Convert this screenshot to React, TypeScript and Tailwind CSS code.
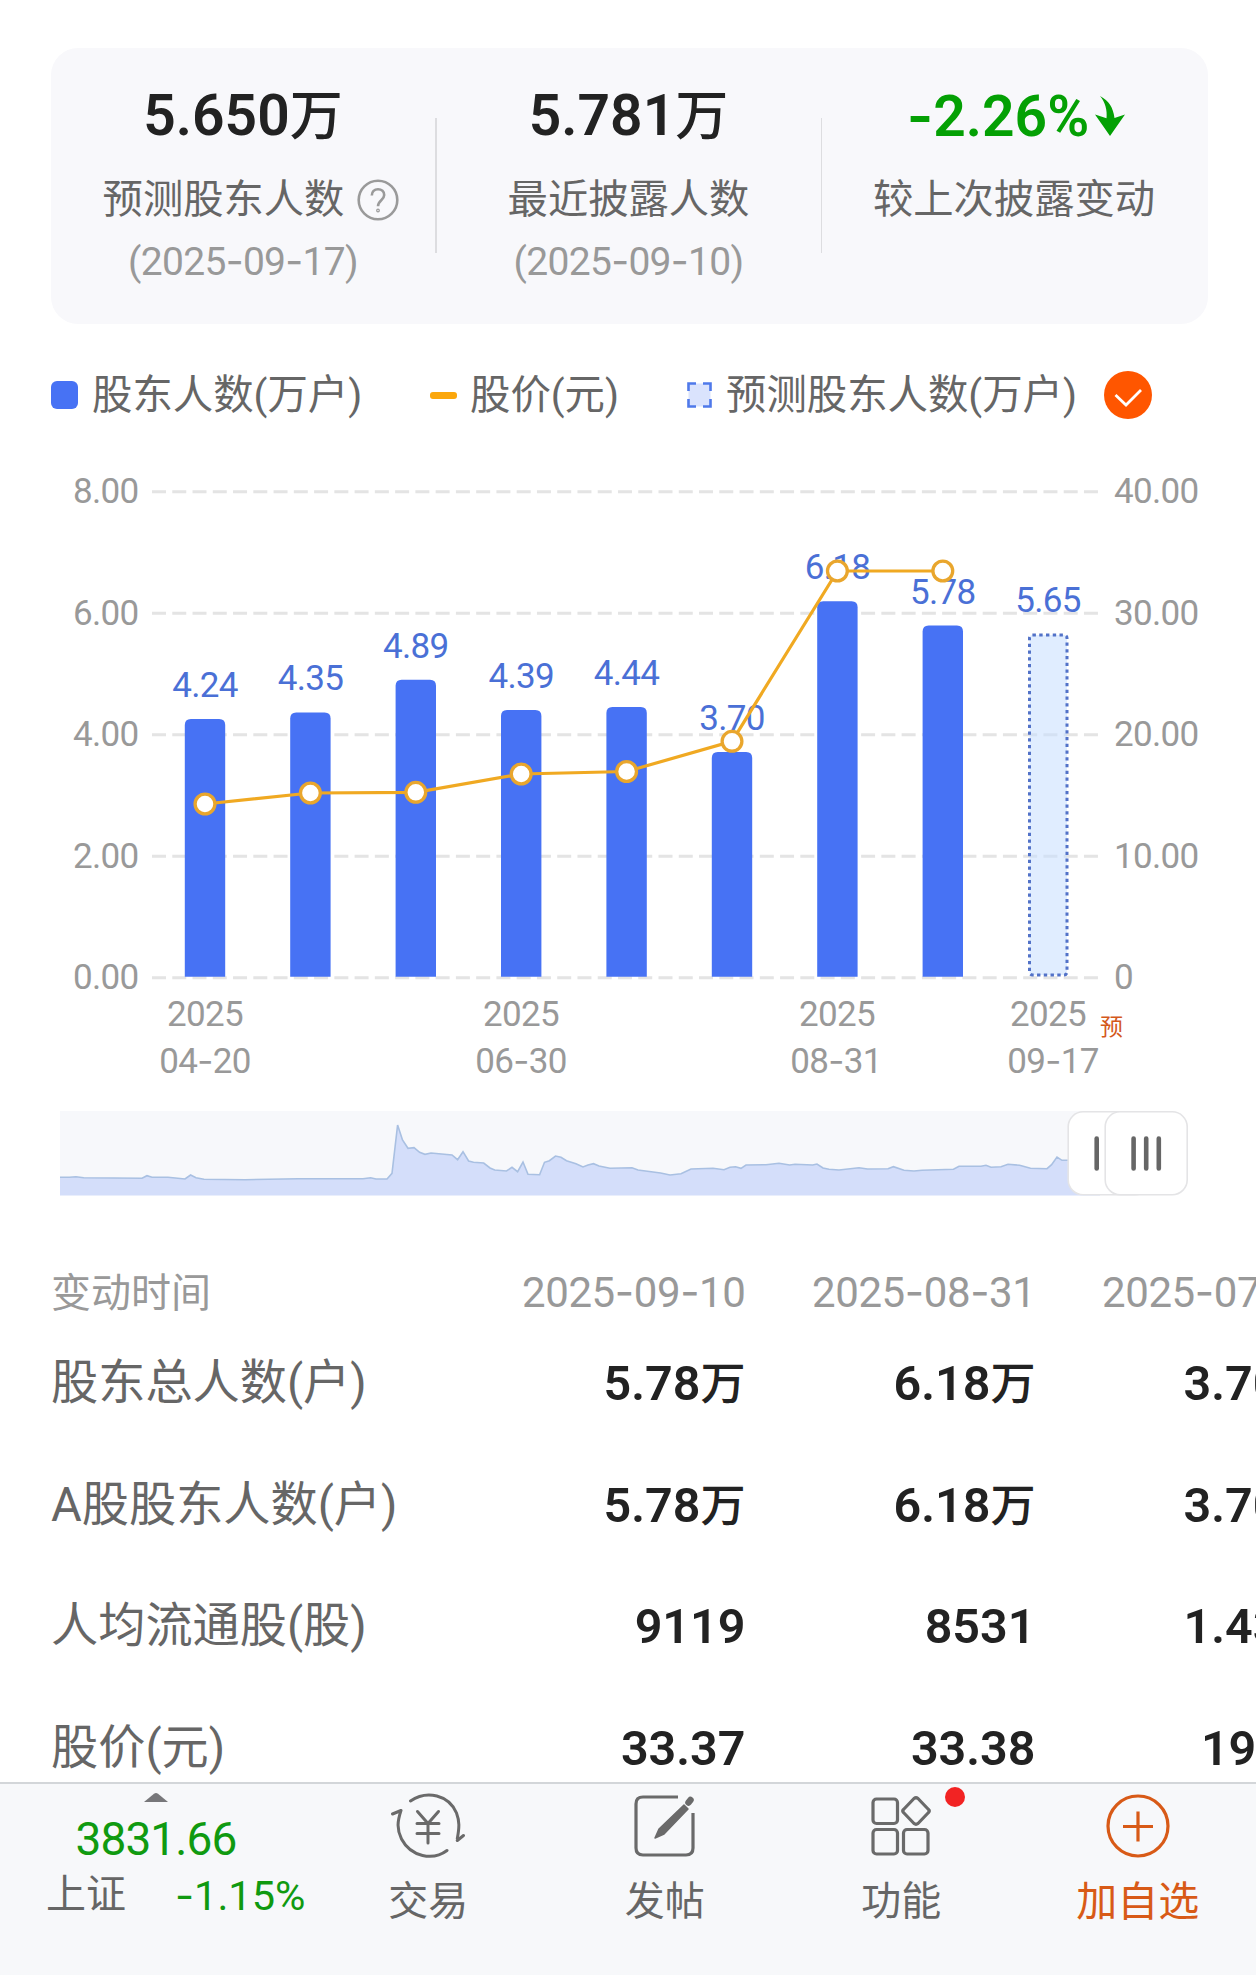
import { Fragment } from "react"

const holders = [
  { value: 4.24, priceY: 804 },
  { value: 4.35, priceY: 793 },
  { value: 4.89, priceY: 792.3 },
  { value: 4.39, priceY: 774 },
  { value: 4.44, priceY: 771.5 },
  { value: 3.7, priceY: 741.3 },
  { value: 6.18, priceY: 571 },
  { value: 5.78, priceY: 571 },
]

const axis = [
  { left: "8.00", right: "40.00", y: 491.7 },
  { left: "6.00", right: "30.00", y: 613.3 },
  { left: "4.00", right: "20.00", y: 734.7 },
  { left: "2.00", right: "10.00", y: 856.2 },
  { left: "0.00", right: "0", y: 977.7 },
]

const dates = [
  { year: "2025", day: "04-20", x: 205, dayX: 205 },
  { year: "2025", day: "06-30", x: 521, dayX: 521 },
  { year: "2025", day: "08-31", x: 837, dayX: 836 },
  { year: "2025", day: "09-17", x: 1048, dayX: 1053 },
]

const columns = ["2025-09-10", "2025-08-31", "2025-07-31"]

const rows = [
  { name: "股东总人数(户)", values: ["5.78万", "6.18万", "3.70万"] },
  { name: "A股股东人数(户)", values: ["5.78万", "6.18万", "3.70万"] },
  { name: "人均流通股(股)", values: ["9119", "8531", "1.43万"] },
  { name: "股价(元)", values: ["33.37", "33.38", "19.45"] },
]

const history =
  "0,66.3 9.4,66.3 16,65.7 23.7,66.7 82,67.3 87,64.7 92,66.3 108,66.3 125,68 130.6,64 136,66.7 144,68.3 185,68.7 238,67.7 303,67.7 310.6,66.7 316,68 327,68 332,62.3 337.6,14 342.5,29 348,37.3 354,36.7 359.6,41.3 365,43.3 371,42 392,44 397.6,48.7 403,40.7 408.6,50 413.5,51.3 423.7,52 430,57 434.7,59 446.5,60 452,56.3 457.6,60.7 463,51 468,63.3 479.6,63.7 484.5,51.3 489.4,49.7 495.5,45 501,46.3 506.5,49.7 516,52.7 523,56 528,54 533.5,52.7 539,55 550,57.3 572,56.7 578,59 600.6,62 610,64 621,62.7 631,58 653,57.3 664,58.7 670,56.3 675.6,55.7 681,57.3 686,54 706,53.7 719,52.3 729.6,54 735,53.3 752.7,54 757,53 763,57 769,58.3 779,59 799,56.7 807.5,58 828,57.7 833.4,55.7 844,59.3 854,60 862,59.3 893.5,58.3 899,55.3 921,55.3 926,54.3 931,56.3 941,55.7 948,53.3 959.6,54.3 970.5,57.3 987,57.7 991.6,53.7 997,46 1002,49.3 1040,49.3"

const barX = (i: number) => 205 + i * 105.4
const barTop = (value: number) => 976.7 - value * 60.75

// Roboto has a very short hyphen, so take that one from Inter
const Dashed = ({ text }: { text: string }) => (
  <>
    {text.split("-").map((part, i) => (
      <Fragment key={i}>
        {i > 0 && <span className="font-['Inter']">-</span>}
        {part}
      </Fragment>
    ))}
  </>
)

const DashedSvg = ({ text }: { text: string }) => (
  <>
    {text.split("-").map((part, i) => (
      <Fragment key={i}>
        {i > 0 && <tspan className="font-['Inter']">-</tspan>}
        {part}
      </Fragment>
    ))}
  </>
)

// the unit is a little smaller and lighter than the digits
const Amount = ({ text }: { text: string }) => (
  <>
    {text.replace("万", "")}
    {text.endsWith("万") && <span className="text-[0.93em] font-medium">万</span>}
  </>
)

function Summary() {
  return (
    <section className="mx-[51px] mt-12 flex h-[276px] w-[1157px] shrink-0 items-start rounded-[27px] bg-[#f8f8fb]">
      <div className="flex w-96 flex-col items-center pt-[35px]">
        <div className="h-[66px] text-[57px] leading-[66px] font-semibold text-[#222]"><Amount text="5.650万" /></div>
        <div className="ml-4 mt-[21px] flex h-[60px] items-center gap-[13px] text-[40.3px] leading-[60px] text-[#666]">
          预测股东人数
          <svg width="42" height="42" viewBox="0 0 42 42" fill="none" stroke="#9a9a9a" strokeWidth="2.6">
            <circle cx="21" cy="21" r="19.3" />
            <path d="M14.8 16.5c0-3.8 2.6-6.3 6.2-6.3s6.2 2.4 6.2 5.8c0 5.2-6.2 5.4-6.2 11.3" />
            <circle cx="21" cy="31.5" r=".6" />
          </svg>
        </div>
        <div className="mt-px h-[60px] text-[39px] leading-[60px] tracking-[-0.7px] text-[#999]"><Dashed text="(2025-09-17)" /></div>
      </div>
      <div className="mt-[70px] h-[135px] w-[1.5px] bg-[#dddde0]" />
      <div className="flex w-96 flex-col items-center pt-[35px]">
        <div className="h-[66px] text-[57px] leading-[66px] font-semibold text-[#222]"><Amount text="5.781万" /></div>
        <div className="mt-[21px] h-[60px] text-[40.3px] leading-[60px] text-[#666]">最近披露人数</div>
        <div className="mt-px h-[60px] text-[39px] leading-[60px] tracking-[-0.7px] text-[#999]"><Dashed text="(2025-09-10)" /></div>
      </div>
      <div className="mt-[70px] h-[135px] w-[1.5px] bg-[#dddde0]" />
      <div className="flex w-96 flex-col items-center pt-[35px]">
        <div className="ml-1 flex h-[66px] items-center gap-1.5 text-[57px] leading-[66px] font-semibold text-[#04a004]">
          <span><Dashed text="-2.26%" /></span>
          <svg width="30" height="40" viewBox="0 0 30 40" fill="#04a004">
            <path d="M5 0C14 5 18 11 19.5 22L30 18.5 15 40 0 18.5l11.5 3.8C12.500 14 10 6 5 0Z" />
          </svg>
        </div>
        <div className="mt-[21px] h-[60px] text-[40.3px] leading-[60px] text-[#666]">较上次披露变动</div>
      </div>
    </section>
  )
}

function Legend() {
  return (
    <div className="mt-[41px] ml-[51px] flex h-[60px] shrink-0 items-center text-[40.4px] leading-[60px] text-[#666]">
      <span className="mr-[14px] h-7 w-[27px] rounded-md bg-[#4772f4]" />
      <span className="w-[338px] pt-0.5">股东人数(万户)</span>
      <span className="mr-[13px] h-[7px] w-[27px] rounded-[3px] bg-[#fba70c]" />
      <span className="w-[217px] pt-0.5">股价(元)</span>
      <svg className="mr-[14px]" width="25" height="26" viewBox="0 0 25 26">
        <rect x="1.500" y="1.500" width="22" height="23" fill="#dae3fd" />
        <path d="M1.500 9V1.500H9M16 1.500h7.500V9M23.500 17v7.500H16M9 24.500H1.500V17" fill="none" stroke="#4f79ea" strokeWidth="2.600" />
      </svg>
      <span className="w-[378px] pt-0.5">预测股东人数(万户)</span>
      <svg width="48" height="48" viewBox="0 0 48 48">
        <circle cx="24" cy="24" r="24" fill="#ff5600" />
        <path d="M11.500 24L22 34 37 19" fill="none" stroke="#fff" strokeWidth="2.800" />
      </svg>
    </div>
  )
}

function Chart() {
  return (
    <svg className="mt-5 block shrink-0 text-[35px] tracking-[-0.7px]" width="1256" height="650" viewBox="0 445 1256 650">
      {axis.map((a) => (
        <g key={a.left} fill="#999">
          <line x1="152" x2="1098" y1={a.y} y2={a.y} stroke="#e4e4e4" strokeWidth="3" strokeDasharray="14 6.26" />
          <text x="138.500" y={a.y + 11.5} textAnchor="end">{a.left}</text>
          <text x="1114" y={a.y + 11.5}>{a.right}</text>
        </g>
      ))}
      {holders.map((h, i) => {
        const x = barX(i) - 20.2
        const y = barTop(h.value)
        return (
          <g key={i}>
            <path d={`M${x} 976.700V${y + 6}q0-6 6-6h28.400q6 0 6 6V976.700Z`} fill="#4772f4" />
            <text x={barX(i)} y={y - 22} textAnchor="middle" fill="#4a70d6">{h.value.toFixed(2)}</text>
          </g>
        )
      })}
      <rect x="1029.500" y="635" width="37.500" height="340" rx="3" fill="#c7dfff" fillOpacity=".55" stroke="#5272c8" strokeWidth="3" strokeDasharray="3.400 3.350" />
      <text x="1048" y="611.500" textAnchor="middle" fill="#4a70d6">5.65</text>
      <polyline points={holders.map((h, i) => `${barX(i)},${h.priceY}`).join(" ")} fill="none" stroke="#f0a922" strokeWidth="3.200" />
      {holders.map((h, i) => (
        <circle key={i} cx={barX(i)} cy={h.priceY} r="9.900" fill="#fff" stroke="#e9a62d" strokeWidth="3.300" />
      ))}
      {dates.map((d) => (
        <g key={d.day} fill="#999" textAnchor="middle">
          <text x={d.x} y="1026">{d.year}</text>
          <text x={d.dayX} y="1073"><DashedSvg text={d.day} /></text>
        </g>
      ))}
      <text x="1100" y="1035" className="text-[23px]" fill="#d4591b">预</text>
    </svg>
  )
}

function RangeSlider() {
  return (
    <svg className="mt-4 ml-[59.5px] block shrink-0" width="1130" height="85" viewBox="0 0 1130 85">
      <rect width="1060" height="84" fill="#f7f8fb" />
      <polygon points={`0,84.500 ${history} 1040,84.500`} fill="#d4defa" />
      <polyline points={history} fill="none" stroke="#a9c0e2" strokeWidth="1.600" />
      <rect x="1008.200" y=".8" width="82" height="83" rx="15" fill="#fff" stroke="#e4e4e6" strokeWidth="1.600" />
      <path d="M1036.700 27.500v30" stroke="#666" strokeWidth="4.600" strokeLinecap="round" />
      <rect x="1045.200" y=".8" width="82" height="83" rx="15" fill="#fff" stroke="#e4e4e6" strokeWidth="1.600" />
      <path d="M1073.600 27.500v30M1086.200 27.500v30M1098.800 27.500v30" stroke="#666" strokeWidth="4.600" strokeLinecap="round" />
    </svg>
  )
}

function HolderTable() {
  return (
    <section className="mt-[66px] ml-[51px] min-h-0 flex-1 overflow-hidden">
      <div className="flex h-[60px] w-[1275px] items-center text-[#999]">
        <div className="w-[404.5px] shrink-0 pt-[3px] text-[40px] leading-[60px]">变动时间</div>
        {columns.map((c) => (
          <div key={c} className="w-[290px] shrink-0 text-right text-[42px] leading-[60px] tracking-[-0.4px]"><Dashed text={c} /></div>
        ))}
      </div>
      {rows.map((row) => (
        <div key={row.name} className="flex h-[121.5px] w-[1275px] items-start text-[#222]">
          <div className="w-[404.5px] shrink-0 pt-[28px] text-[47.2px] leading-[66px] text-[#666]">{row.name}</div>
          {row.values.map((v, i) => (
            <div key={i} className="w-[290px] shrink-0 pt-[29px] text-right text-[48.5px] leading-[66px] font-semibold"><Amount text={v} /></div>
          ))}
        </div>
      ))}
    </section>
  )
}

function TradeIcon() {
  return (
    <svg width="76" height="66" viewBox="0 0 76 66" fill="none" stroke="#6a6a6a" strokeWidth="3" strokeLinecap="round" strokeLinejoin="round">
      <path d="M20.500 8C37-3.500 59 2 66.500 20c3 8 3 14 .8 25.500M67.300 47.500L73.500 42.500" />
      <path d="M57 57.500C43 68 21 64 11.500 46 6.500 36 7.500 28 11 17.500M11 17.500L2.500 21" />
      <path d="M27.500 18.500L38 30.500 48.500 18.500M38 30.500V50M27 30.500h22M27 40.500h22" />
    </svg>
  )
}

function PostIcon() {
  return (
    <svg width="62" height="62" viewBox="0 0 62 62" fill="none" stroke="#6a6a6a" strokeWidth="3.200">
      <path d="M44 2H9Q2 2 2 9v44q0 7 7 7h43q7 0 7-7V18" />
      <path d="M50 10l4 4-24 25-9 4 4-9Z" fill="#6a6a6a" strokeWidth="1.500" strokeLinejoin="round" />
      <path d="M54.500 7.500l2-2.500" strokeWidth="6.500" strokeLinecap="round" />
    </svg>
  )
}

function FeatureIcon() {
  return (
    <svg width="60" height="62" viewBox="0 0 60 62" fill="none" stroke="#6a6a6a" strokeWidth="3.200" strokeLinejoin="round">
      <rect x="2" y="4" width="24.500" height="24.500" rx="3.500" />
      <rect x="2" y="34.500" width="24.500" height="24.500" rx="3.500" />
      <rect x="32.500" y="34.500" width="24.500" height="24.500" rx="3.500" />
      <path d="M43 3.500q2-1.500 4 0L57.500 14.500q1.500 1.500 0 3L47 28.500q-2 1.500-4 0L32.500 17.500q-1.500-1.500 0-3Z" />
    </svg>
  )
}

function AddIcon() {
  return (
    <svg width="64" height="64" viewBox="0 0 64 64" fill="none" stroke="#d85a17" strokeWidth="3.200">
      <circle cx="32" cy="32" r="30" />
      <path d="M17 32.500h30M32 17.500v30" />
    </svg>
  )
}

function BottomBar() {
  const tabs = [
    { name: "交易", icon: <TradeIcon /> },
    { name: "发帖", icon: <PostIcon /> },
    { name: "功能", icon: <FeatureIcon />, dot: true },
    { name: "加自选", icon: <AddIcon />, active: true },
  ]
  return (
    <footer className="flex h-[193px] shrink-0 border-t-2 border-[#d3d6d9] bg-[#f7f8fa]">
      <div className="flex w-[310px] flex-col">
        <svg className="mt-[9px] ml-36" width="24" height="9" viewBox="0 0 24 9" fill="#77777a"><path d="M0 9L10 .8q2-1.400 4 0L24 9Z" /></svg>
        <div className="mt-[7px] h-[60px] w-[312px] text-center text-[46px] leading-[60px] tracking-[-0.9px] text-[#109a10]">3831.66</div>
        <div className="-mt-[3px] ml-[46px] flex h-[58px] items-center text-[40px] leading-[58px]">
          <span className="w-[129px] text-[#666]">上证</span>
          <span className="text-[41.5px] text-[#109a10]"><Dashed text="-1.15%" /></span>
        </div>
      </div>
      {tabs.map((t) => (
        <button key={t.name} className="flex w-[236.5px] flex-col items-center pt-[9px]">
          <span className="relative flex h-[66px] items-center">
            {t.icon}
            {t.dot && <i className="absolute -top-1.5 left-[74px] size-5 rounded-full bg-[#f22323]" />}
          </span>
          <span className={t.active ? "mt-[13px] text-[41px] leading-[60px] text-[#d85a17]" : "mt-[13px] text-[40px] leading-[60px] text-[#666]"}>{t.name}</span>
        </button>
      ))}
    </footer>
  )
}

export default function App() {
  return (
    <main className="flex h-[1975px] w-[1256px] flex-col overflow-hidden bg-white font-['Roboto','Noto_Sans_CJK_SC',sans-serif]">
      <Summary />
      <Legend />
      <Chart />
      <RangeSlider />
      <HolderTable />
      <BottomBar />
    </main>
  )
}
